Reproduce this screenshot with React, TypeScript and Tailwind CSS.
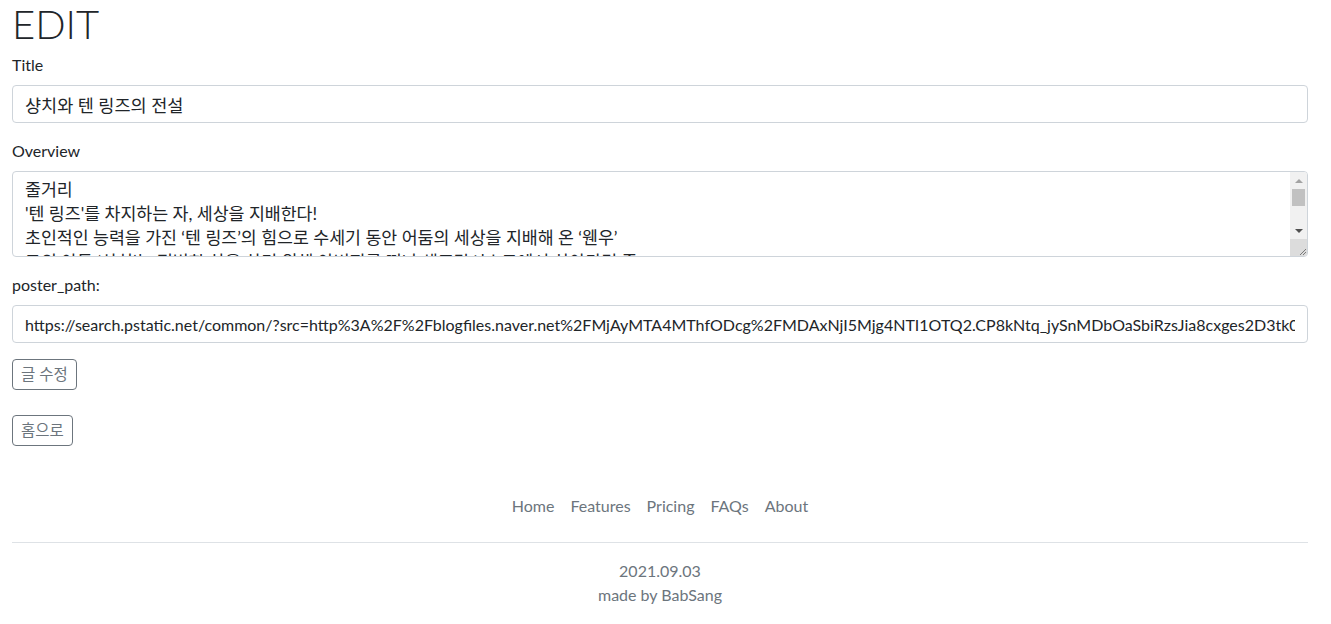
import { useState } from "react";

const overview = `줄거리
'텐 링즈'를 차지하는 자, 세상을 지배한다!
초인적인 능력을 가진 ‘텐 링즈’의 힘으로 수세기 동안 어둠의 세상을 지배해 온 ‘웬우’
그의 아들 ‘샹치’는 평범한 삶을 살기 위해 아버지를 떠나 샌프란시스코에서 살아가던 중
아버지가 보낸 자객들의 공격을 받고 가족을 지키기 위해 마카오로 향한다.`;

const posterPath =
  "https://search.pstatic.net/common/?src=http%3A%2F%2Fblogfiles.naver.net%2FMjAyMTA4MThfODcg%2FMDAxNjI5Mjg4NTI1OTQ2.CP8kNtq_jySnMDbOaSbiRzsJia8cxges2D3tk0g.jpg&type=sc960_832";

// fake classic scrollbar drawn over the textarea
function Scrollbar() {
  return (
    <div className="absolute top-px right-px bottom-px w-[17px] flex flex-col bg-[#f1f1f1] rounded-tr-[3px] rounded-br-[3px] overflow-hidden">
      <div className="h-[17px] flex items-center justify-center">
        <svg width="8" height="4" viewBox="0 0 8 4">
          <path d="M0 4 L4 0 L8 4 Z" fill="#a3a3a3" />
        </svg>
      </div>
      <div className="h-[17px] mx-[2px] bg-[#c1c1c1]" />
      <div className="flex-1" />
      <div className="h-[17px] flex items-center justify-center">
        <svg width="8" height="4" viewBox="0 0 8 4">
          <path d="M0 0 L8 0 L4 4 Z" fill="#505050" />
        </svg>
      </div>
      <div className="h-[17px] bg-[#dcdcdc] flex items-end justify-end">
        <svg width="10" height="10" viewBox="0 0 10 10">
          <path d="M9 3 L3 9 M9 6 L6 9" stroke="#7a7a7a" strokeWidth="1" />
        </svg>
      </div>
    </div>
  );
}

export default function App() {
  const [title, setTitle] = useState("샹치와 텐 링즈의 전설");
  const [body, setBody] = useState(overview);
  const [poster, setPoster] = useState(posterPath);

  const inputCls =
    "block w-full h-[38px] px-3 py-[6px] leading-6 text-[#212529] bg-white border border-[#ced4da] rounded-[4px] outline-none";
  const btnCls =
    "px-2 py-1 text-[15.5px] leading-[21px] text-[#6c757d] border border-[#6c757d] rounded-[4px] bg-white";

  return (
    <div
      className="pl-3 pr-[23px] text-[#212529] bg-white min-h-screen"
      style={{ fontFamily: 'Lato, "Noto Sans CJK KR", sans-serif' }}
    >
      <h1 className="text-[40px] leading-[48px] font-light mb-[5px]">EDIT</h1>

      <form>
        <div className="mb-4">
          <label className="block mb-2 text-base leading-6">Title</label>
          <input
            className={inputCls + " text-[17.5px]"}
            value={title}
            onChange={(e) => setTitle(e.target.value)}
          />
        </div>

        <div className="mb-4">
          <label className="block mb-2 text-base leading-6">Overview</label>
          <div className="relative">
            <textarea
              rows={3}
              className="block w-full h-[86px] pl-3 pr-[30px] py-[6px] text-[17.3px] leading-6 text-[#212529] bg-white border border-[#ced4da] rounded-[4px] outline-none resize-none overflow-y-hidden whitespace-pre"
              value={body}
              onChange={(e) => setBody(e.target.value)}
            />
            <Scrollbar />
          </div>
        </div>

        <div className="mb-4">
          <label className="block mb-2 text-base leading-6">poster_path:</label>
          <input
            className={inputCls + " text-base"}
            value={poster}
            onChange={(e) => setPoster(e.target.value)}
          />
        </div>

        <button type="button" className={btnCls}>
          글 수정
        </button>
      </form>

      <div className="mt-[25px]">
        <button type="button" className={btnCls}>
          홈으로
        </button>
      </div>

      <footer className="mt-6 py-4">
        <ul className="flex justify-center border-b border-[#dee2e6] pb-4 mb-4">
          {["Home", "Features", "Pricing", "FAQs", "About"].map((item) => (
            <li key={item}>
              <a href="#" className="block px-2 py-2 text-base leading-6 text-[#6c757d]">
                {item}
              </a>
            </li>
          ))}
        </ul>
        <p className="text-center text-base leading-6 text-[#6c757d]">2021.09.03</p>
        <p className="text-center text-base leading-6 text-[#6c757d]">made by BabSang</p>
      </footer>
    </div>
  );
}
